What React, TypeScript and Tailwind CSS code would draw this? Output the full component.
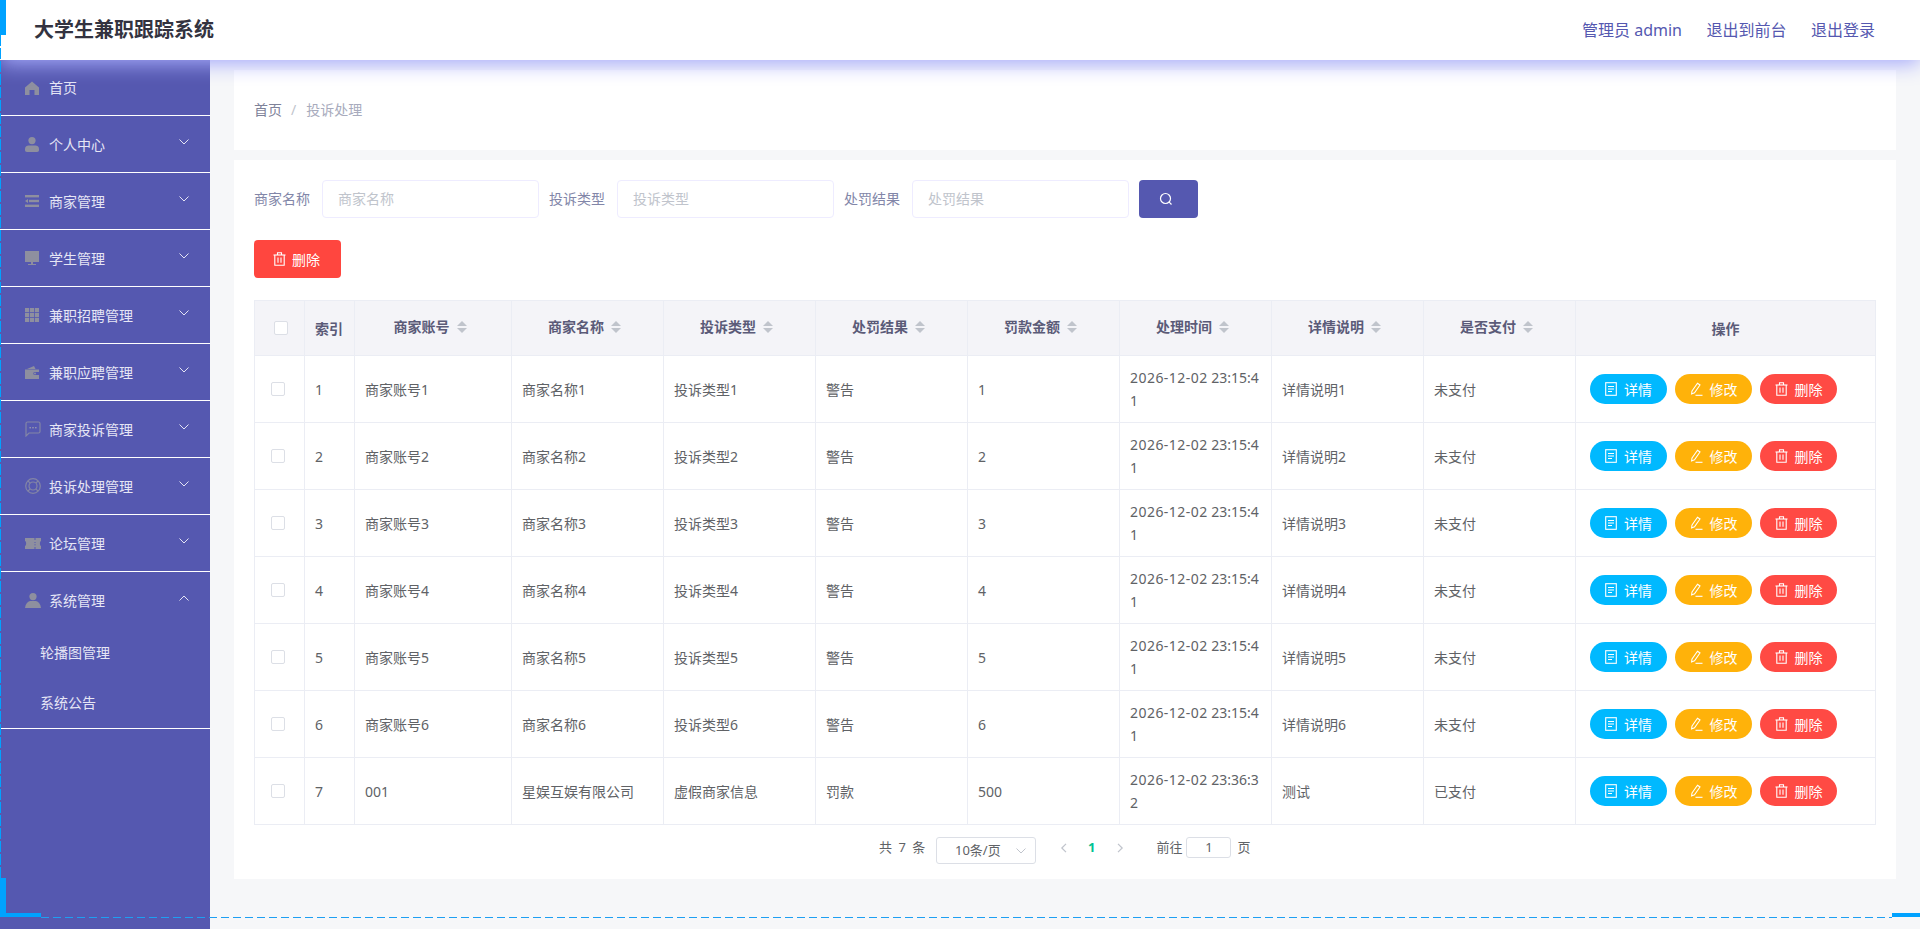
import React from "react";

const FONT = '"Noto Sans", "Noto Sans CJK SC", sans-serif';

const Home = () => (
  <svg viewBox="0 0 14 14" className="w-[14px] h-[14px]" fill="#8e8f9f">
    <path d="M7 0.5 L14 6.5 L14 14 L9.5 14 L9.5 9 L4.5 9 L4.5 14 L0 14 L0 6.5 Z" />
  </svg>
);
const User = () => (
  <svg viewBox="0 0 14 15" className="w-[14px] h-[15px]" fill="#8e8f9f">
    <circle cx="7" cy="3.6" r="3.6" />
    <path d="M0 12 C0 9.5 2 8.6 3.5 8.6 L10.5 8.6 C12 8.6 14 9.5 14 12 L14 13 C14 14.2 13.4 15 12 15 L2 15 C0.6 15 0 14.2 0 13 Z" />
  </svg>
);
const Lines = () => (
  <svg viewBox="0 0 14 12" className="w-[14px] h-[12px]" fill="#8e8f9f">
    <rect x="0" y="0" width="14" height="2.4" />
    <rect x="4" y="4.8" width="10" height="2.4" />
    <path d="M0 6 L3 4 L3 8 Z" />
    <rect x="0" y="9.6" width="14" height="2.4" />
  </svg>
);
const Monitor = () => (
  <svg viewBox="0 0 14 14" className="w-[14px] h-[14px]" fill="#8e8f9f">
    <rect x="0" y="0" width="14" height="11" />
    <rect x="6" y="11" width="2" height="2" />
    <rect x="3" y="13" width="8" height="1" />
  </svg>
);
const Grid = () => (
  <svg viewBox="0 0 14 14" className="w-[14px] h-[14px]" fill="#8e8f9f">
    {[0, 5, 10].flatMap((y) =>
      [0, 5, 10].map((x) => <rect key={`${x}-${y}`} x={x} y={y} width="4.2" height="4.2" />)
    )}
  </svg>
);
const Wallet = () => (
  <svg viewBox="0 0 14 13" className="w-[14px] h-[13px]" fill="#8e8f9f">
    <path d="M2 3 L9 0 L10.5 3 Z" />
    <path fillRule="evenodd" d="M0 3.5 L14 3.5 L14 6 L9.5 6 C8 6 8 9 9.5 9 L14 9 L14 13 L0 13 Z" />
    <circle cx="10" cy="7.5" r="1" />
  </svg>
);
const Chat = () => (
  <svg viewBox="0 0 16 16" className="w-[16px] h-[16px]" fill="none" stroke="#8385a6" strokeWidth="1.2">
    <path d="M1 2.5 C1 1.5 1.5 1 2.5 1 L13.5 1 C14.5 1 15 1.5 15 2.5 L15 10.5 C15 11.5 14.5 12 13.5 12 L4 12 L1 15 Z" />
    <g fill="#9a9bb0" stroke="none">
      <rect x="4.5" y="6" width="1.4" height="1.4" />
      <rect x="7.3" y="6" width="1.4" height="1.4" />
      <rect x="10.1" y="6" width="1.4" height="1.4" />
    </g>
  </svg>
);
const Buoy = () => (
  <svg viewBox="0 0 16 16" className="w-[16px] h-[16px]" fill="none" stroke="#8385a6" strokeWidth="1.2">
    <circle cx="8" cy="8" r="7.3" />
    <circle cx="8" cy="8" r="4" />
    <path d="M3 3 L5.2 5.2 M13 3 L10.8 5.2 M3 13 L5.2 10.8 M13 13 L10.8 10.8" />
  </svg>
);
const Ticket = () => (
  <svg viewBox="0 0 16 11" className="w-[16px] h-[11px]" fill="#8e8f9f">
    <path d="M0 0 L9.5 0 L9.5 2 L10.5 2 L10.5 0 L16 0 L16 3 C14.6 3.5 14.6 7.5 16 8 L16 11 L10.5 11 L10.5 9 L9.5 9 L9.5 11 L0 11 L0 8 C1.6 7.5 1.6 3.5 0 3 Z" />
    <g fill="#5558b0">
      <rect x="9.5" y="4" width="1" height="1" />
      <rect x="9.5" y="6.3" width="1" height="1" />
    </g>
  </svg>
);
const Custom = () => (
  <svg viewBox="0 0 16 15" className="w-[16px] h-[15px]" fill="#8e8f9f">
    <circle cx="8" cy="3.6" r="3.6" />
    <path d="M5 8 L11 8 C13.5 8.5 15.5 11 16 15 L0 15 C0.5 11 2.5 8.5 5 8 Z" />
  </svg>
);

const Chevron = ({ up = false, color = "#e4e4f4", cls = "w-[10px] h-[6px]" }: { up?: boolean; color?: string; cls?: string }) => (
  <svg viewBox="0 0 10 6" className={cls} fill="none" stroke={color} strokeWidth="1">
    <path d={up ? "M0.5 5.5 L5 1 L9.5 5.5" : "M0.5 0.5 L5 5 L9.5 0.5"} />
  </svg>
);

const DocIcon = () => (
  <svg viewBox="0 0 12 14" className="w-[12px] h-[14px]" fill="none" stroke="#fff" strokeWidth="1.1">
    <rect x="0.7" y="0.7" width="10.6" height="12.6" />
    <path d="M3 4.5 L9 4.5 M3 7 L9 7 M3 9.5 L7 9.5" />
  </svg>
);
const PenIcon = () => (
  <svg viewBox="0 0 13 14" className="w-[13px] h-[14px]" fill="none" stroke="#fff" strokeWidth="1.1">
    <path d="M2 9 L7.5 1.2 L10 3 L4.5 10.8 L1.6 12 Z" />
    <path d="M5.5 13.3 L12.5 13.3" />
  </svg>
);
const TrashIcon = () => (
  <svg viewBox="0 0 13 14" className="w-[13px] h-[14px]" fill="none" stroke="#fff" strokeWidth="1.1">
    <path d="M0.5 3 L12.5 3" />
    <path d="M4.5 3 L4.5 0.8 L8.5 0.8 L8.5 3" />
    <path d="M1.8 3 L1.8 13.3 L11.2 13.3 L11.2 3" />
    <path d="M5 5.5 L5 10.8 M8 5.5 L8 10.8" />
  </svg>
);
const SortIcon = () => (
  <svg viewBox="0 0 10 12" className="w-[10px] h-[12px] ml-[7px]" fill="#c0c4cc">
    <path d="M5 0 L10 5 L0 5 Z" />
    <path d="M0 7 L10 7 L5 12 Z" />
  </svg>
);

const menu: { name: string; icon: React.ReactNode }[] = [
  { name: "个人中心", icon: <User /> },
  { name: "商家管理", icon: <Lines /> },
  { name: "学生管理", icon: <Monitor /> },
  { name: "兼职招聘管理", icon: <Grid /> },
  { name: "兼职应聘管理", icon: <Wallet /> },
  { name: "商家投诉管理", icon: <Chat /> },
  { name: "投诉处理管理", icon: <Buoy /> },
  { name: "论坛管理", icon: <Ticket /> },
];

const rows = [
  { i: "1", acc: "商家账号1", name: "商家名称1", type: "投诉类型1", res: "警告", fine: "1", d: "2026-12-02", t1: "23:15:4", t2: "1", desc: "详情说明1", pay: "未支付" },
  { i: "2", acc: "商家账号2", name: "商家名称2", type: "投诉类型2", res: "警告", fine: "2", d: "2026-12-02", t1: "23:15:4", t2: "1", desc: "详情说明2", pay: "未支付" },
  { i: "3", acc: "商家账号3", name: "商家名称3", type: "投诉类型3", res: "警告", fine: "3", d: "2026-12-02", t1: "23:15:4", t2: "1", desc: "详情说明3", pay: "未支付" },
  { i: "4", acc: "商家账号4", name: "商家名称4", type: "投诉类型4", res: "警告", fine: "4", d: "2026-12-02", t1: "23:15:4", t2: "1", desc: "详情说明4", pay: "未支付" },
  { i: "5", acc: "商家账号5", name: "商家名称5", type: "投诉类型5", res: "警告", fine: "5", d: "2026-12-02", t1: "23:15:4", t2: "1", desc: "详情说明5", pay: "未支付" },
  { i: "6", acc: "商家账号6", name: "商家名称6", type: "投诉类型6", res: "警告", fine: "6", d: "2026-12-02", t1: "23:15:4", t2: "1", desc: "详情说明6", pay: "未支付" },
  { i: "7", acc: "001", name: "星娱互娱有限公司", type: "虚假商家信息", res: "罚款", fine: "500", d: "2026-12-02", t1: "23:36:3", t2: "2", desc: "测试", pay: "已支付" },
];

const headers = ["商家账号", "商家名称", "投诉类型", "处罚结果", "罚款金额", "处理时间", "详情说明", "是否支付"];
const colW = [157, 152, 152, 152, 152, 152, 152, 152];

const Th = ({ children, cls = "" }: { children?: React.ReactNode; cls?: string }) => (
  <th className={`border border-[#ebedf4] bg-[#f4f4f8] p-0 font-semibold text-[14px] text-[#5b5b78] align-middle ${cls}`}>{children}</th>
);
const Td = ({ children }: { children?: React.ReactNode }) => (
  <td className="border border-[#ebedf4] px-[10px] py-0 text-[14px] leading-[23px] text-[#606266] align-middle">{children}</td>
);

const Pill = ({ color, icon, text }: { color: string; icon: React.ReactNode; text: string }) => (
  <button className={`flex items-center justify-center gap-[7px] w-[77px] h-[30px] rounded-full text-white text-[14px] ${color}`}>
    {icon}
    <span>{text}</span>
  </button>
);

const Field = ({ label }: { label: string }) => (
  <div className="flex items-center mr-[10px]">
    <span className="text-[14px] text-[#8286a8] w-[56px] mr-[12px] pb-[2px] whitespace-nowrap">{label}</span>
    <div className="w-[217px] h-[38px] rounded-[4px] border border-[#eeecff] bg-white pl-[15px] pb-[2px] flex items-center text-[14px] text-[#c0c4cc]">
      {label}
    </div>
  </div>
);

export default function App() {
  return (
    <div className="relative h-[929px] w-[1920px] overflow-hidden flex flex-col bg-[#f6f7f9]" style={{ fontFamily: FONT }}>
      <header className="relative z-10 h-[60px] shrink-0 bg-white flex items-center justify-between pl-[34px] pr-[45px] shadow-[0_4px_20px_#a5a9fa]">
        <div className="text-[20px] font-bold text-[#333340]">大学生兼职跟踪系统</div>
        <div className="flex items-center gap-[24.5px] text-[16px] text-[#5558b0]">
          <span>管理员 admin</span>
          <span>退出到前台</span>
          <span>退出登录</span>
        </div>
      </header>

      <div className="flex flex-1 min-h-0">
        <aside className="w-[210px] shrink-0 bg-[#5558b0] text-[14px] text-[#e6e6f5]">
          <div className="h-[56px] border-b border-white flex items-center pl-[25px]">
            <span className="w-[24px] flex items-center"><Home /></span>
            <span>首页</span>
          </div>
          {menu.map((m) => (
            <div key={m.name} className="relative h-[57px] border-b border-white flex items-center pl-[24.5px]">
              <span className="w-[24.5px] flex items-center">{m.icon}</span>
              <span>{m.name}</span>
              <span className="absolute left-[179px] top-[23px] flex"><Chevron /></span>
            </div>
          ))}
          <div className="border-b border-white">
            <div className="relative h-[56px] flex items-center pl-[24.5px]">
              <span className="w-[24.5px] flex items-center"><Custom /></span>
              <span>系统管理</span>
              <span className="absolute left-[179px] top-[23px] flex"><Chevron up /></span>
            </div>
            <div className="h-[50px] pb-[2px] flex items-center pl-[40px]">轮播图管理</div>
            <div className="h-[50px] pb-[2px] flex items-center pl-[40px]">系统公告</div>
          </div>
        </aside>

        <main className="flex-1 min-w-0 pt-[10px] px-[24px]">
          <div className="h-[80px] bg-white pl-[20px] pb-[2px] flex items-center text-[14px] mb-[10px]">
            <span className="text-[#7e8299]">首页</span>
            <span className="ml-[9px] mr-[10px] text-[#c0c4cc]">/</span>
            <span className="text-[#a8abbd]">投诉处理</span>
          </div>

          <div className="h-[719px] bg-white px-[20px] pt-[20px]">
            <div className="flex items-center h-[38px]">
              <Field label="商家名称" />
              <Field label="投诉类型" />
              <Field label="处罚结果" />
              <button className="w-[59px] h-[38px] rounded-[4px] bg-[#5558b0] flex items-center justify-center">
                <svg viewBox="0 0 14 14" className="w-[14px] h-[14px] -ml-[6px]" fill="none" stroke="#fff" strokeWidth="1.2">
                  <circle cx="6.5" cy="6.5" r="5" />
                  <path d="M10.2 10.2 L12.5 12.5" />
                </svg>
              </button>
            </div>

            <button className="mt-[22px] w-[87px] h-[38px] rounded-[4px] bg-[#ff463f] text-white text-[14px] flex items-center justify-center gap-[6px] pr-[2px]">
              <TrashIcon />
              <span>删除</span>
            </button>

            <table className="mt-[22px] w-[1621px] table-fixed border-collapse">
              <colgroup>
                <col className="w-[50px]" />
                <col className="w-[50px]" />
                {colW.map((w, i) => (
                  <col key={i} style={{ width: w }} />
                ))}
                <col className="w-[300px]" />
              </colgroup>
              <thead>
                <tr className="h-[55px]">
                  <Th>
                    <div className="ml-[19px] w-[14px] h-[14px] rounded-[2px] border border-[#dcdfe6] bg-white" />
                  </Th>
                  <Th cls="text-left pl-[10px]">索引</Th>
                  {headers.map((h) => (
                    <Th key={h}>
                      <div className="flex items-center justify-center -mt-[3px] pr-[6px]">
                        <span>{h}</span>
                        <SortIcon />
                      </div>
                    </Th>
                  ))}
                  <Th>操作</Th>
                </tr>
              </thead>
              <tbody>
                {rows.map((r) => (
                  <tr key={r.i} className="h-[67px]">
                    <Td>
                      <div className="ml-[6px] w-[14px] h-[14px] rounded-[2px] border border-[#dcdfe6] bg-white" />
                    </Td>
                    <Td>{r.i}</Td>
                    <Td>{r.acc}</Td>
                    <Td>{r.name}</Td>
                    <Td>{r.type}</Td>
                    <Td>{r.res}</Td>
                    <Td>{r.fine}</Td>
                    <Td>
                      <span className="tracking-[0.46px]">{r.d}</span> {r.t1}
                      <br />
                      {r.t2}
                    </Td>
                    <Td>{r.desc}</Td>
                    <Td>{r.pay}</Td>
                    <Td>
                      <div className="flex gap-[8px] ml-[4px]">
                        <Pill color="bg-[#00b9ff]" icon={<DocIcon />} text="详情" />
                        <Pill color="bg-[#ffb20a]" icon={<PenIcon />} text="修改" />
                        <Pill color="bg-[#ff4a44]" icon={<TrashIcon />} text="删除" />
                      </div>
                    </Td>
                  </tr>
                ))}
              </tbody>
            </table>

            <div className="mt-[12px] ml-[625px] flex items-start text-[13px] text-[#606266] h-[27px]">
              <span className="mt-[1px] w-[57px] whitespace-pre [word-spacing:3px]">共 7 条</span>
              <div className="w-[100px] h-[27px] rounded-[3px] border border-[#dcdfe6] pl-[18px] pr-[9px] flex items-center justify-between">
                <span>10条/页</span>
                <Chevron color="#c0c4cc" />
              </div>
              <span className="ml-[24px] mt-[6px] flex"><svg viewBox="0 0 8 12" className="w-[7px] h-[10px]" fill="none" stroke="#c0c4cc" strokeWidth="1.5"><path d="M7 1 L2 6 L7 11" /></svg></span>
              <span className="ml-[21px] font-bold text-[#00c292] mt-[1px]">1</span>
              <span className="ml-[22px] mt-[6px] flex"><svg viewBox="0 0 8 12" className="w-[7px] h-[10px]" fill="none" stroke="#c0c4cc" strokeWidth="1.5"><path d="M1 1 L6 6 L1 11" /></svg></span>
              <span className="ml-[32px] mt-[1px]">前往</span>
              <div className="ml-[4px] w-[45px] h-[21px] rounded-[3px] border border-[#dcdfe6] flex items-center justify-center">1</div>
              <span className="ml-[6px] mt-[1px]">页</span>
            </div>
          </div>
        </main>
      </div>

      {/* corner decoration overlaying the page */}
      <div className="absolute z-20 left-0 top-0 w-[6px] h-[35px] bg-[#00a2ff]" />
      <div className="absolute z-20 left-0 top-[35px] w-px h-[843px] bg-[repeating-linear-gradient(to_bottom,#00a2ff_0,#00a2ff_11px,transparent_11px,transparent_13px)]" />
      <div className="absolute z-20 left-0 top-[878px] w-[6px] h-[39px] bg-[#00a2ff]" />
      <div className="absolute z-20 left-0 top-[913px] w-[41px] h-[4px] bg-[#00a2ff]" />
      <div className="absolute z-20 left-[41px] top-[917px] w-[1851px] h-px bg-[repeating-linear-gradient(to_right,#1e9ff2_0,#1e9ff2_8px,transparent_8px,transparent_12px)]" />
      <div className="absolute z-20 left-[1892px] top-[913px] w-[28px] h-[4px] bg-[#00a2ff]" />
    </div>
  );
}
